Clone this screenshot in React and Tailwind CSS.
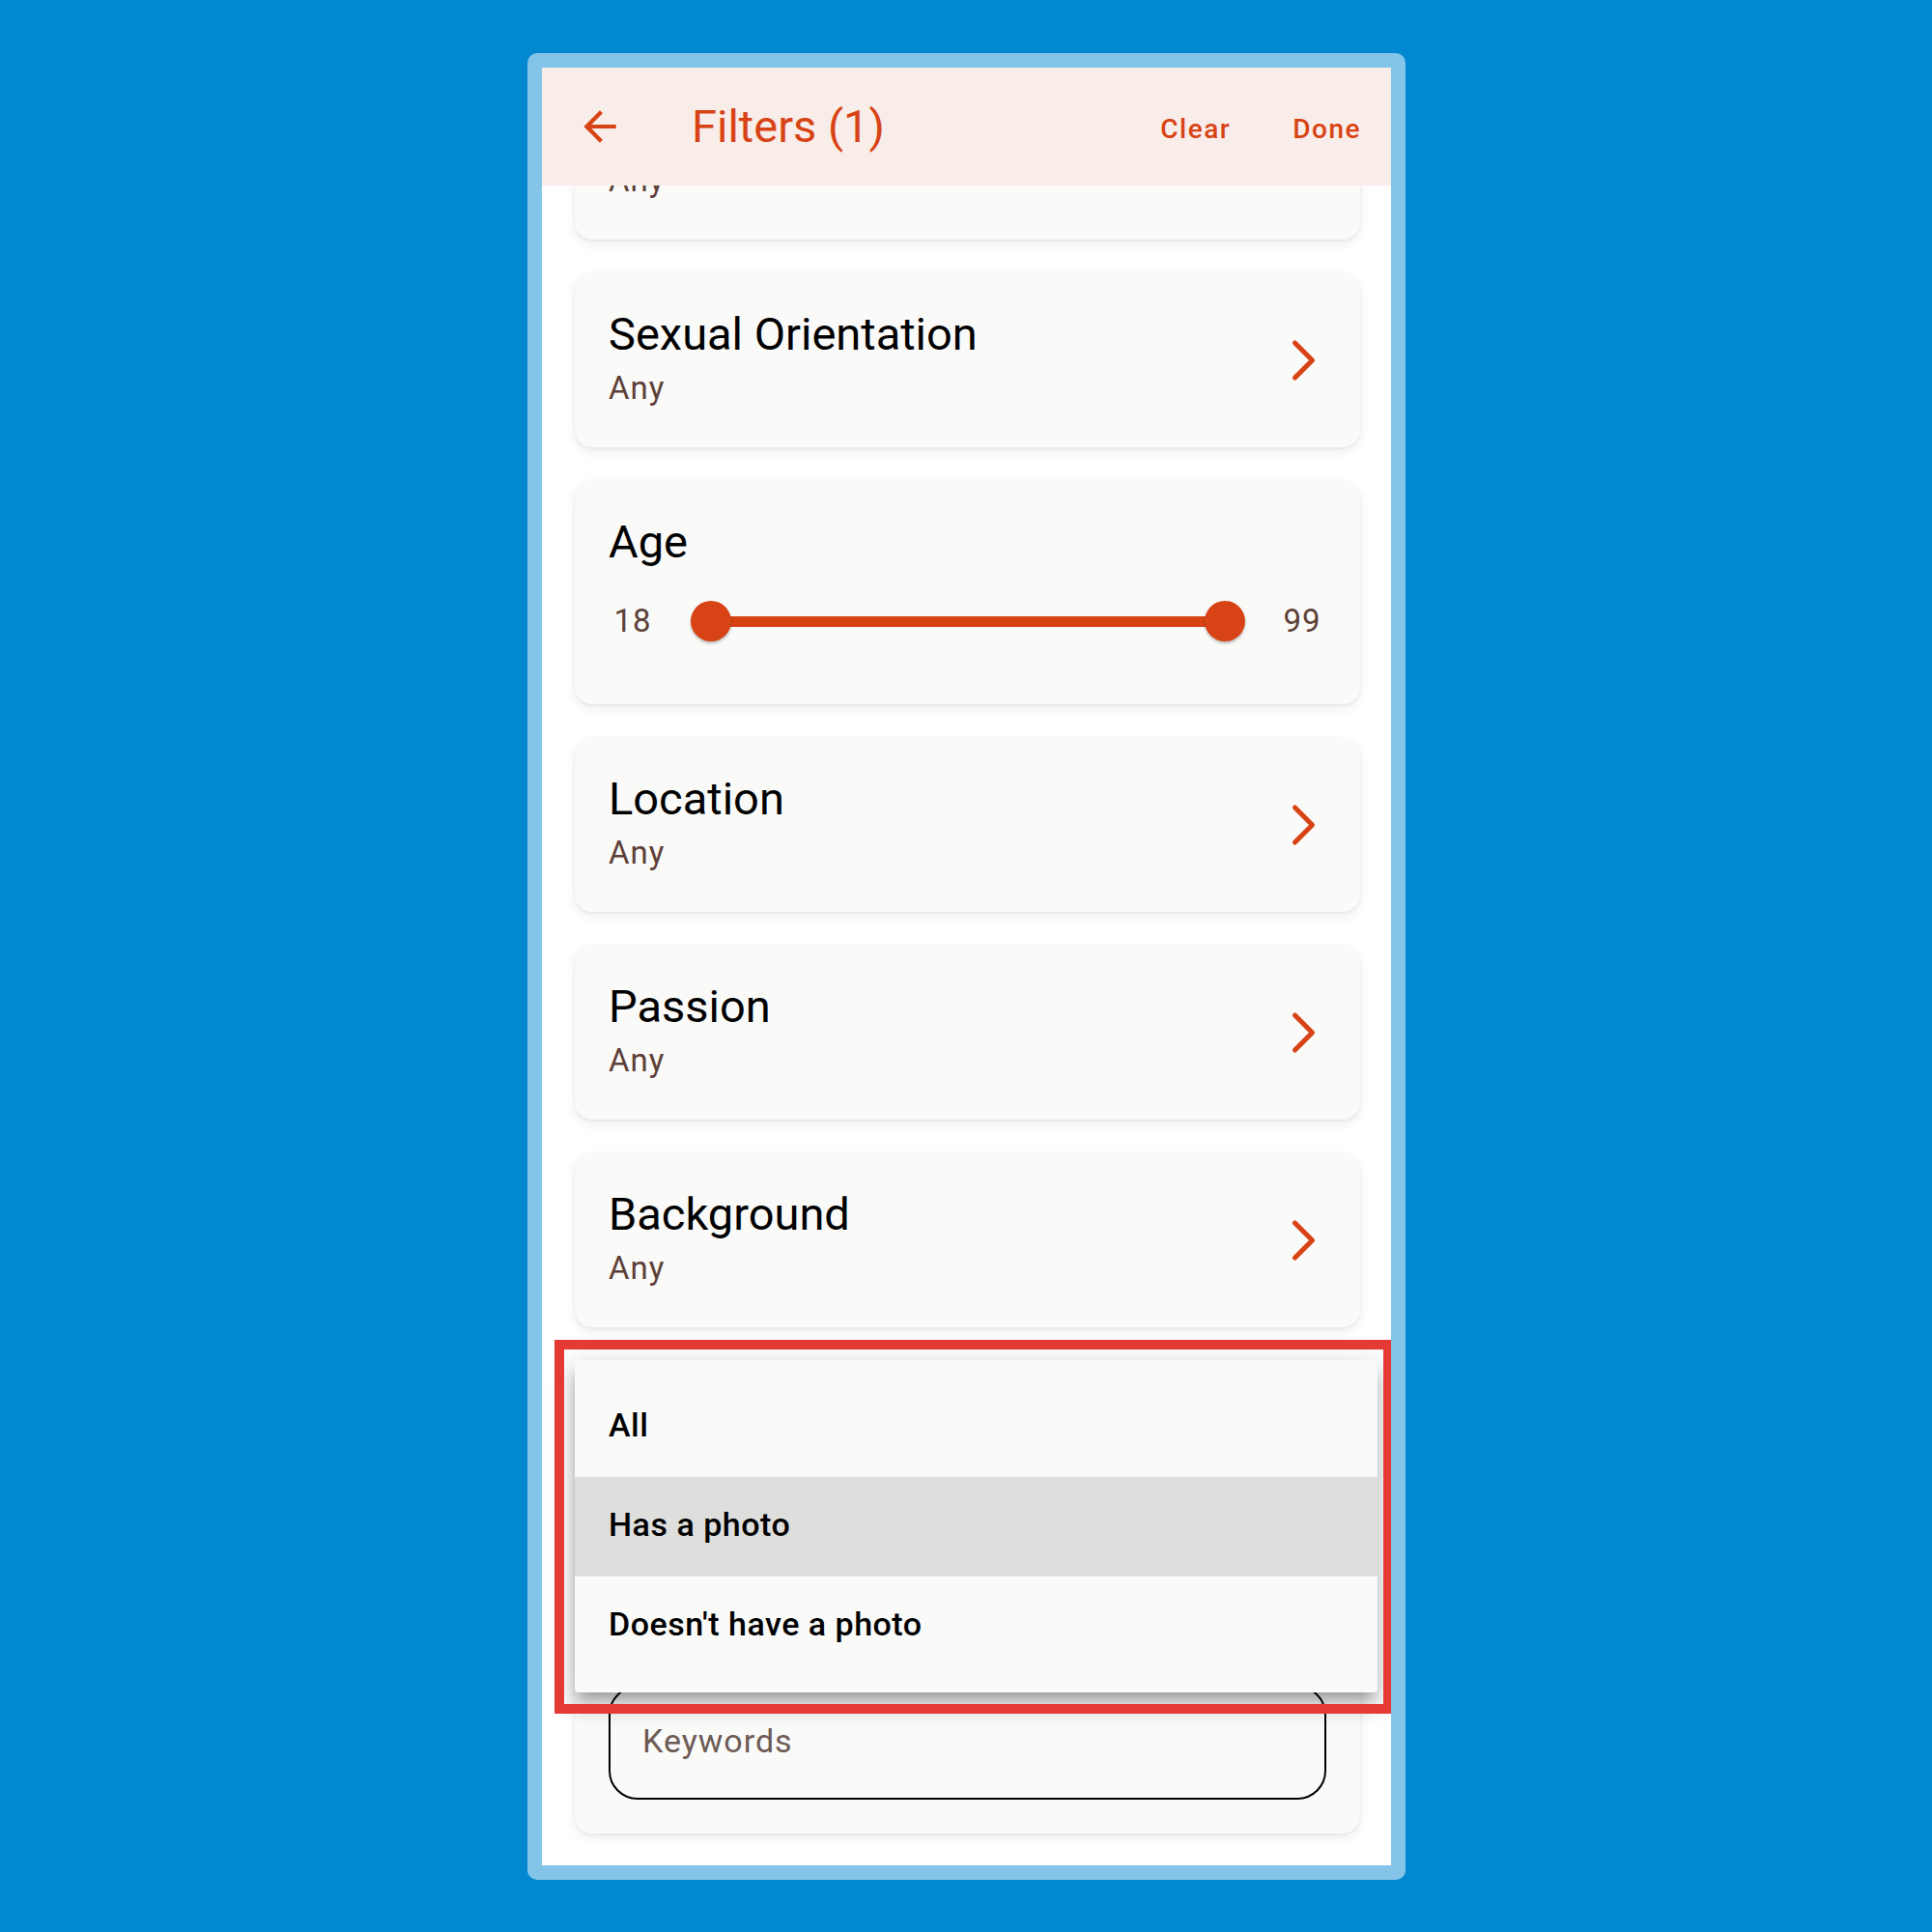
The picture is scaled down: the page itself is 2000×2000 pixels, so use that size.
import React from "react";

function Chevron() {
  return (
    <svg width="30" height="46" viewBox="0 0 30 46" className="shrink-0">
      <polyline points="5.5,5 23.5,23 5.5,41" fill="none" stroke="#d84315" strokeWidth="5" strokeLinecap="round" strokeLinejoin="round" />
    </svg>
  );
}

function NavCard({ title, value }) {
  return (
    <div className="h-[180px] shrink-0 rounded-[18px] bg-[#fafaf9] shadow-[0_4px_12px_rgba(0,0,0,0.08),0_1px_3px_rgba(0,0,0,0.06)] flex items-center pl-[35px] pr-[43px]">
      <div className="flex-1 flex flex-col pb-[3px]">
        <div className="text-[47px] leading-[54px] text-black">{title}</div>
        <div className="mt-[7px] text-[33px] leading-[44px] tracking-[1px] text-[#5d4037]">{value}</div>
      </div>
      <Chevron />
    </div>
  );
}

export default function App() {
  return (
    <div className="w-[2000px] h-[2000px] bg-[#0288d1] pt-[55px] pl-[546px] font-[Roboto,sans-serif]">
      <div className="w-[909px] h-[1891px] rounded-[10px] border-[15px] border-[#84c4e8] bg-white overflow-hidden flex flex-col">
        {/* Header */}
        <div className="h-[122px] shrink-0 bg-[#f9ede9] flex items-center pr-[31px]">
          <svg width="50" height="50" viewBox="0 0 24 24" className="ml-[35px] shrink-0">
            <path d="M20 11H7.83l5.59-5.59L12 4l-8 8 8 8 1.41-1.41L7.83 13H20v-2z" fill="#d84315" />
          </svg>
          <div className="ml-[70px] text-[47px] leading-[56px] text-[#d84315]">Filters (1)</div>
          <div className="ml-auto pt-[5px] text-[28px] font-medium tracking-[1.5px] text-[#d84315]">Clear</div>
          <div className="ml-[64px] pt-[5px] text-[28px] font-medium tracking-[1.5px] text-[#d84315]">Done</div>
        </div>

        {/* Scrolled content */}
        <div className="flex-1 overflow-hidden pl-[34px] pr-[32px]">
          <div className="-mt-[124px] flex flex-col gap-[35px]">
            <NavCard title="Gender" value="Any" />
            <NavCard title="Sexual Orientation" value="Any" />

            {/* Age */}
            <div className="h-[231px] shrink-0 rounded-[18px] bg-[#fafaf9] shadow-[0_4px_12px_rgba(0,0,0,0.08),0_1px_3px_rgba(0,0,0,0.06)] flex flex-col pl-[35px] pr-[35px] pt-[36px]">
              <div className="text-[47px] leading-[54px] text-black">Age</div>
              <div className="mt-[34px] flex items-center h-[42px]">
                <div className="w-[50px] text-center text-[33px] leading-[42px] text-[#5d4037] tracking-[1px]">18</div>
                <div className="relative flex-1 h-[42px] ml-[35px] mr-[34px]">
                  <div className="absolute left-[21px] right-[21px] top-[16px] h-[11px] bg-[#d84315]" />
                  <div className="absolute left-0 top-0 w-[42px] h-[42px] rounded-full bg-[#d84315] shadow-[0_2px_3px_rgba(0,0,0,0.25)]" />
                  <div className="absolute right-0 top-0 w-[42px] h-[42px] rounded-full bg-[#d84315] shadow-[0_2px_3px_rgba(0,0,0,0.25)]" />
                </div>
                <div className="w-[50px] text-center text-[33px] leading-[42px] text-[#5d4037] tracking-[1px]">99</div>
              </div>
            </div>

            <NavCard title="Location" value="Any" />
            <NavCard title="Passion" value="Any" />
            <NavCard title="Background" value="Any" />

            {/* Photo card with open menu */}
            <div className="relative h-[489px] shrink-0 rounded-[18px] bg-[#fafaf9] shadow-[0_4px_12px_rgba(0,0,0,0.08),0_1px_3px_rgba(0,0,0,0.06)] flex flex-col px-[35px] pt-[36px] pb-[35px]">
              <div className="mt-auto h-[118px] rounded-[30px] border-2 border-black flex items-center pl-[33px] pb-[4px] text-[34px] tracking-[1px] text-[#6d5b55]">
                Keywords
              </div>

              {/* Dropdown menu */}
              <div className="absolute left-0 top-[-1px] w-[831px] h-[344px] rounded-[4px] bg-[#fafaf9] pt-[18px] pb-[17px] flex flex-col shadow-[0_10px_10px_-6px_rgba(0,0,0,0.2),0_16px_20px_2px_rgba(0,0,0,0.14),0_6px_28px_4px_rgba(0,0,0,0.12)] z-10">
                <div className="h-[103px] flex items-center pl-[35px] pb-[5px] text-[34px] tracking-[0.5px] font-medium text-black">All</div>
                <div className="h-[103px] flex items-center pl-[35px] pb-[5px] text-[34px] tracking-[0.5px] font-medium text-black bg-[#dededc]">Has a photo</div>
                <div className="h-[103px] flex items-center pl-[35px] pb-[5px] text-[34px] tracking-[0.5px] font-medium text-black">Doesn't have a photo</div>
              </div>

              {/* Annotation box */}
              <div className="absolute left-[-21px] top-[-22px] w-[868px] h-[387px] border-[10px] border-[#e53935] z-20 pointer-events-none" />
            </div>
          </div>
        </div>
      </div>
    </div>
  );
}
